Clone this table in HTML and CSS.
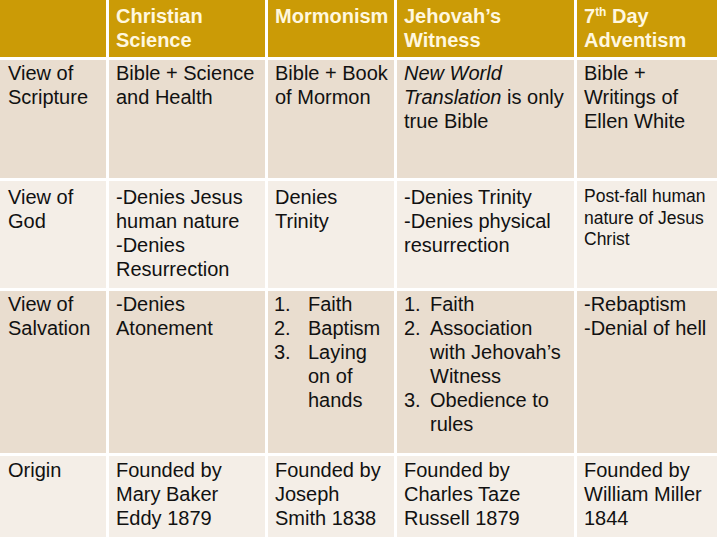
FILE: index.html
```html
<!DOCTYPE html>
<html>
<head>
<meta charset="utf-8">
<link rel="stylesheet" href="styles.css">
</head>
<body>
<div class="table">
  <div class="cell head"></div>
  <div class="cell head">Christian<br>Science</div>
  <div class="cell head">Mormonism</div>
  <div class="cell head">Jehovah’s<br>Witness</div>
  <div class="cell head">7<sup>th</sup> Day<br>Adventism</div>

  <div class="cell odd">View of<br>Scripture</div>
  <div class="cell odd">Bible + Science<br>and Health</div>
  <div class="cell odd">Bible + Book<br>of Mormon</div>
  <div class="cell odd"><i>New World<br>Translation</i> is only<br>true Bible</div>
  <div class="cell odd">Bible +<br>Writings of<br>Ellen White</div>

  <div class="cell even">View of<br>God</div>
  <div class="cell even">-Denies Jesus<br>human nature<br>-Denies<br>Resurrection</div>
  <div class="cell even">Denies<br>Trinity</div>
  <div class="cell even">-Denies Trinity<br>-Denies physical<br>resurrection</div>
  <div class="cell even small">Post-fall human<br>nature of Jesus<br>Christ</div>

  <div class="cell odd">View of<br>Salvation</div>
  <div class="cell odd">-Denies<br>Atonement</div>
  <div class="cell odd">
    <div class="li wide"><span class="num">1.</span><span>Faith</span></div>
    <div class="li wide"><span class="num">2.</span><span>Baptism</span></div>
    <div class="li wide"><span class="num">3.</span><span>Laying<br>on of<br>hands</span></div>
  </div>
  <div class="cell odd">
    <div class="li"><span class="num">1.</span><span>Faith</span></div>
    <div class="li"><span class="num">2.</span><span>Association<br>with Jehovah’s<br>Witness</span></div>
    <div class="li"><span class="num">3.</span><span>Obedience to<br>rules</span></div>
  </div>
  <div class="cell odd">-Rebaptism<br>-Denial of hell</div>

  <div class="cell even last">Origin</div>
  <div class="cell even last">Founded by<br>Mary Baker<br>Eddy 1879</div>
  <div class="cell even last">Founded by<br>Joseph<br>Smith 1838</div>
  <div class="cell even last">Founded by<br>Charles Taze<br>Russell 1879</div>
  <div class="cell even last">Founded by<br>William Miller<br>1844</div>
</div>
</body>
</html>
```
FILE: styles.css
```css
html, body {
  margin: 0;
  padding: 0;
  background: #ffffff;
}
body {
  width: 720px;
  height: 540px;
  overflow: hidden;
  font-family: "Liberation Sans", Arial, sans-serif;
}
.table {
  display: grid;
  grid-template-columns: 106px 156px 126px 177px 140px;
  grid-template-rows: 57px 118px 107px 162px 81px;
  gap: 3px;
  width: 717px;
  background: #ffffff;
}
.cell {
  padding: 4px 4px 0 7px;
  font-size: 20px;
  line-height: 24px;
  color: #111111;
  white-space: nowrap;
  overflow: hidden;
}
.cell:nth-child(5n+1) {
  padding-left: 8px;
}
.head {
  background: #cb9b06;
  color: #fff7df;
  font-weight: bold;
}
.head sup {
  font-size: 12px;
  line-height: 0;
  vertical-align: 7px;
  font-weight: bold;
}
.odd {
  background: #e9ddcf;
  padding-top: 1px;
}
.even {
  background: #f4eee7;
}
.even.last {
  padding-top: 2px;
}
.small {
  font-size: 17.5px;
  line-height: 21.5px;
  padding-top: 5px;
}
.li {
  display: flex;
}
.li .num {
  width: 26px;
  flex: none;
}
.li.wide .num {
  width: 34px;
}
.li.wide {
  margin-left: -1px;
}
```
